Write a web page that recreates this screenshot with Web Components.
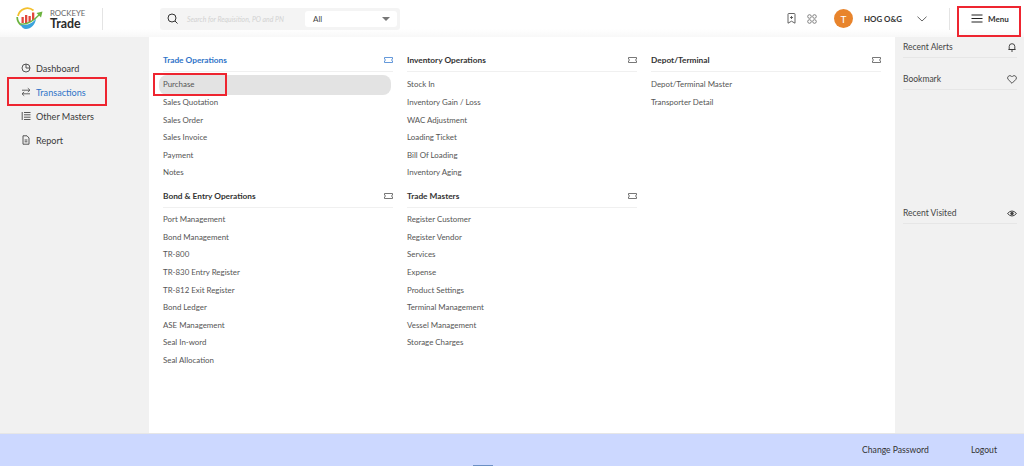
<!DOCTYPE html>
<html><head><meta charset="utf-8">
<style>
html,body{margin:0;padding:0;height:466px;overflow:hidden;background:#fff;font-family:Lato,"Liberation Sans",sans-serif;color:#333}
body{display:flex;flex-direction:column;position:relative}
</style></head>
<body>
<app-header></app-header>
<div style="flex:1;display:flex;min-height:0">
  <side-nav>
    <nav-item icon="clock">Dashboard</nav-item>
    <nav-item icon="swap" active>Transactions</nav-item>
    <nav-item icon="list">Other Masters</nav-item>
    <nav-item icon="doc">Report</nav-item>
  </side-nav>
  <mega-menu>
    <menu-section heading="Trade Operations" active>
      <menu-item active>Purchase</menu-item><menu-item>Sales Quotation</menu-item><menu-item>Sales Order</menu-item><menu-item>Sales Invoice</menu-item><menu-item>Payment</menu-item><menu-item>Notes</menu-item>
    </menu-section>
    <menu-section heading="Inventory Operations">
      <menu-item>Stock In</menu-item><menu-item>Inventory Gain / Loss</menu-item><menu-item>WAC Adjustment</menu-item><menu-item>Loading Ticket</menu-item><menu-item>Bill Of Loading</menu-item><menu-item>Inventory Aging</menu-item>
    </menu-section>
    <menu-section heading="Depot/Terminal">
      <menu-item>Depot/Terminal Master</menu-item><menu-item>Transporter Detail</menu-item>
    </menu-section>
    <menu-section heading="Bond &amp; Entry Operations">
      <menu-item>Port Management</menu-item><menu-item>Bond Management</menu-item><menu-item>TR-800</menu-item><menu-item>TR-830 Entry Register</menu-item><menu-item>TR-812 Exit Register</menu-item><menu-item>Bond Ledger</menu-item><menu-item>ASE Management</menu-item><menu-item>Seal In-word</menu-item><menu-item>Seal Allocation</menu-item>
    </menu-section>
    <menu-section heading="Trade Masters">
      <menu-item>Register Customer</menu-item><menu-item>Register Vendor</menu-item><menu-item>Services</menu-item><menu-item>Expense</menu-item><menu-item>Product Settings</menu-item><menu-item>Terminal Management</menu-item><menu-item>Vessel Management</menu-item><menu-item>Storage Charges</menu-item>
    </menu-section>
  </mega-menu>
  <side-panel></side-panel>
</div>
<app-footer></app-footer>
<red-box style="left:7px;top:77px;width:100px;height:29px"></red-box>
<red-box style="left:153px;top:73px;width:74px;height:23px"></red-box>
<red-box style="left:957px;top:6px;width:64px;height:31px"></red-box>
<script>
const ICONS={
 clock:'<svg width="10" height="10" viewBox="0 0 10 10" fill="none" stroke="#444" stroke-width=".9"><circle cx="5" cy="5" r="4"/><path d="M5 1v4h4"/></svg>',
 swap:'<svg width="10" height="10" viewBox="0 0 10 10" fill="none" stroke="#555" stroke-width=".9"><path d="M1 3.2h8M6.800 1.200 9 3.200 6.800 5M9 6.800H1M3.200 4.900 1 6.800l2.200 2"/></svg>',
 list:'<svg width="10" height="10" viewBox="0 0 10 10" fill="none" stroke="#444" stroke-width=".9"><path d="M1.200 1v8M3 1.500h6.500M3 3.800h6.500M3 6.200h6.500M3 8.500h6.500"/></svg>',
 doc:'<svg width="10" height="10" viewBox="0 0 10 10" fill="none" stroke="#444" stroke-width=".9"><path d="M2 .8h4l2 2.200v6.200H2zM3.600 5h2.800M3.600 6.800h2.800"/></svg>'};
function def(n,html){customElements.define(n,class extends HTMLElement{connectedCallback(){if(this.shadowRoot)return;const s=this.attachShadow({mode:'open'});s.innerHTML=typeof html==='function'?html(this):html;}})}
const TICKET=c=>`<svg width="9" height="6" viewBox="0 0 9 6" fill="none" stroke="${c}" stroke-width=".8"><path d="M.5.5h8v1.600a.9.9 0 0 0 0 1.800v1.600h-8V3.900a.9.9 0 0 0 0-1.800z"/></svg>`;

def('red-box',`<style>:host{position:absolute;display:block;box-sizing:border-box;border:2px solid #ee2530}</style>`);

def('app-header',`<style>
:host{display:flex;align-items:center;height:37px;flex:none;box-sizing:border-box;background:linear-gradient(#fff 78%,#f8f8f8);color:#333}
.logo{margin-left:16px;width:27px;height:23px;flex:none}
.brand{margin-left:7px;width:52px;display:flex;flex-direction:column;line-height:9px}
.brand b{font:700 12.400px/11px Lato,sans-serif;color:#2b2b2b}
.brand span{font-size:7.800px;color:#666}
.sep{width:1px;height:22px;background:#e4e4e4;flex:none}
.search{margin-left:57px;width:240px;height:22px;background:#f4f4f4;border-radius:3px;display:flex;align-items:center;box-sizing:border-box;padding-left:7px}
.ph{margin-left:9px;width:118px;font:italic 6.900px Lato,sans-serif;color:#d2d2d2;white-space:nowrap;flex:none}
.sel{width:92px;height:16px;background:#fff;border-radius:3px;display:flex;align-items:center;justify-content:space-between;box-sizing:border-box;padding:0 7px 0 8px;font-size:8px;color:#444}
.tri{width:0;height:0;border:4px solid transparent;border-top:4.500px solid #777;border-bottom:0}
.sp{flex:1}
.av{margin-left:17px;width:19px;height:19px;border-radius:50%;background:#e8842c;color:#fff;font-size:10px;display:flex;align-items:center;justify-content:center;flex:none}
.nm{margin-left:11px;font-weight:700;font-size:7.900px;color:#333;white-space:nowrap;width:37px}
.mn{display:flex;align-items:center;gap:5px;font-weight:700;font-size:8px;margin:0 16px 0 21px;width:37px;color:#333;flex:none}
.mn svg{flex:none}
</style>
<svg class="logo" viewBox="0 0 27 23" fill="none"><path d="M2 9A9.500 9.500 0 0 1 17.500 3.500" stroke="#f3c02e" stroke-width="1.800"/><path d="M1.200 10c0 3.500 1.300 6 3.800 8" stroke="#6cb33f" stroke-width="1.700"/><path d="M4 17c5 2 12 .5 16-5.500-.6 6-5 10.500-10 10.500-2.500 0-4.500-2-6-5z" fill="#3ba3dc"/><g fill="#e2453c"><rect x="5.500" y="10" width="2.300" height="6"/><rect x="9" y="8" width="2.300" height="8"/><rect x="12.500" y="9" width="2.300" height="6"/><rect x="16" y="5.500" width="2.300" height="7.500"/></g><path d="M4.500 17c7 1 13-3 19-9.500" stroke="#6cb33f" stroke-width="1.300"/><path d="M20.500 6 26.500 4.500 25 10.500z" fill="#6cb33f"/></svg>
<div class="brand"><span>ROCKEYE</span><b>Trade</b></div>
<div class="sep"></div>
<div class="search">
<svg width="11" height="11" viewBox="0 0 11 11" fill="none" stroke="#333" stroke-width="1" style="flex:none"><circle cx="5" cy="5" r="4"/><path d="m8 8 2.500 2.500"/></svg>
<span class="ph">Search for Requisition, PO and PN</span>
<div class="sel"><span>All</span><i class="tri"></i></div>
</div>
<div class="sp"></div>
<svg width="9" height="11" viewBox="0 0 9 11" fill="none" stroke="#555" stroke-width=".9"><path d="M1 1.200q0-.7.700-.7h5.600q.7 0 .7.700v9l-3.500-2-3.500 2zM4.500 3v3M3 4.500h3"/></svg>
<svg style="margin-left:11px" width="10" height="10" viewBox="0 0 10 10" fill="none" stroke="#666" stroke-width=".8"><circle cx="2.500" cy="2.500" r="1.800"/><circle cx="7.500" cy="2.500" r="1.800"/><circle cx="2.500" cy="7.500" r="1.800"/><circle cx="7.500" cy="7.500" r="1.800"/></svg>
<div class="av">T</div>
<div class="nm">HOG O&amp;G</div>
<svg style="margin-left:16px" width="10" height="6" viewBox="0 0 10 6" fill="none" stroke="#555" stroke-width=".9"><path d="m.5.7 4.500 4.300L9.500.7"/></svg>
<div class="sep" style="margin-left:22px"></div>
<div class="mn"><svg width="12" height="9" viewBox="0 0 12 9" stroke="#222" stroke-width="1.100"><path d="M.5 1h11M.5 4.500h11M.5 8h11"/></svg><span>Menu</span></div>`);

def('side-nav',`<style>:host{display:flex;flex-direction:column;width:149px;flex:none;box-sizing:border-box;background:#f1f1f1;padding:19px 0 0 21px;}</style><slot></slot>`);
def('nav-item',h=>`<style>:host{display:flex;align-items:center;height:24px;gap:5px;font-size:9.100px;color:${h.hasAttribute('active')?'#2f74c8':'#3a3a3a'}} svg{display:block}</style>${ICONS[h.getAttribute('icon')]}<span><slot></slot></span>`);

def('mega-menu',`<style>:host{flex:1;display:grid;grid-template-columns:repeat(3,244px);grid-template-rows:auto 1fr;align-content:start;padding:13.700px 0 0 14px;box-sizing:border-box;background:#fff}</style><slot></slot>`);
def('menu-section',h=>{const a=h.hasAttribute('active');return `<style>
:host{display:block;width:230px;--pt:4.800px;--pb:4.900px}
:host(:nth-child(n+4)){--pt:3.300px;--pb:0px}
.h{display:flex;justify-content:space-between;align-items:center;height:18px;padding-bottom:2px;border-bottom:1px solid #f0f0f0;font-weight:700;font-size:8.300px;color:${a?'#2f74c8':'#333'}}
.b{display:flex;flex-direction:column;padding:var(--pt) 0 var(--pb)}
</style><div class="h"><span>${h.getAttribute('heading').replace('&','&amp;')}</span>${TICKET(a?'#3d7fd0':'#555')}</div><div class="b"><slot></slot></div>`});
def('menu-item',h=>`<style>
:host{display:block;height:17.600px;line-height:17.600px;font-size:7.900px;color:#555;white-space:nowrap;margin:0 3px 0 -3px;padding-left:3px;border-radius:7px;${h.hasAttribute('active')?'background:#e3e3e3;box-shadow:0 0 0 1px #e3e3e3;':''}}
</style><slot></slot>`);

const RP=(t,i,top)=>`<div class="r" style="margin-top:${top}px"><span>${t}</span>${i}</div>`;
def('side-panel',`<style>
:host{display:block;width:129px;flex:none;background:#f1f1f1;box-sizing:border-box;padding:0 7px 0 8px}
.r{display:flex;justify-content:space-between;align-items:center;height:20px;border-bottom:1px solid #e6e6e6;font-size:8.500px;color:#444}
</style>`+
RP('Recent Alerts','<svg style="margin-right:1px" width="8" height="10" viewBox="0 0 8 10" fill="none" stroke="#333" stroke-width=".9"><path d="M1.200 7.500V4.500a2.800 2.800 0 0 1 5.600 0v3zM.4 7.500h7.200M3 9h2"/></svg>',0)+
RP('Bookmark','<svg width="10" height="9" viewBox="0 0 10 9" fill="none" stroke="#444" stroke-width=".9"><path d="M5 8.300 1.200 4.500a2.300 2.300 0 0 1 3.300-3.200l.5.500.5-.5a2.300 2.300 0 0 1 3.300 3.200z"/></svg>',11)+
RP('Recent Visited','<svg width="10" height="7" viewBox="0 0 10 7" fill="none" stroke="#444" stroke-width="1"><path d="M.5 3.500Q5-1.500 9.500 3.500 5 8.500.5 3.500z"/><circle cx="5" cy="3.500" r="1.300" fill="#444"/></svg>',113));

def('app-footer',`<style>
:host{display:flex;justify-content:flex-end;align-items:center;height:33px;flex:none;background:#ccd8ff;border-top:1px solid #e6e6e6;box-sizing:border-box;font-size:8.600px;color:#333;padding-right:27px;gap:42px;position:relative}
i{position:absolute;left:473px;bottom:0;width:20px;height:1px;background:#6b8fc4}
</style><span>Change Password</span><span>Logout</span><i></i>`);
</script>
</body></html>
